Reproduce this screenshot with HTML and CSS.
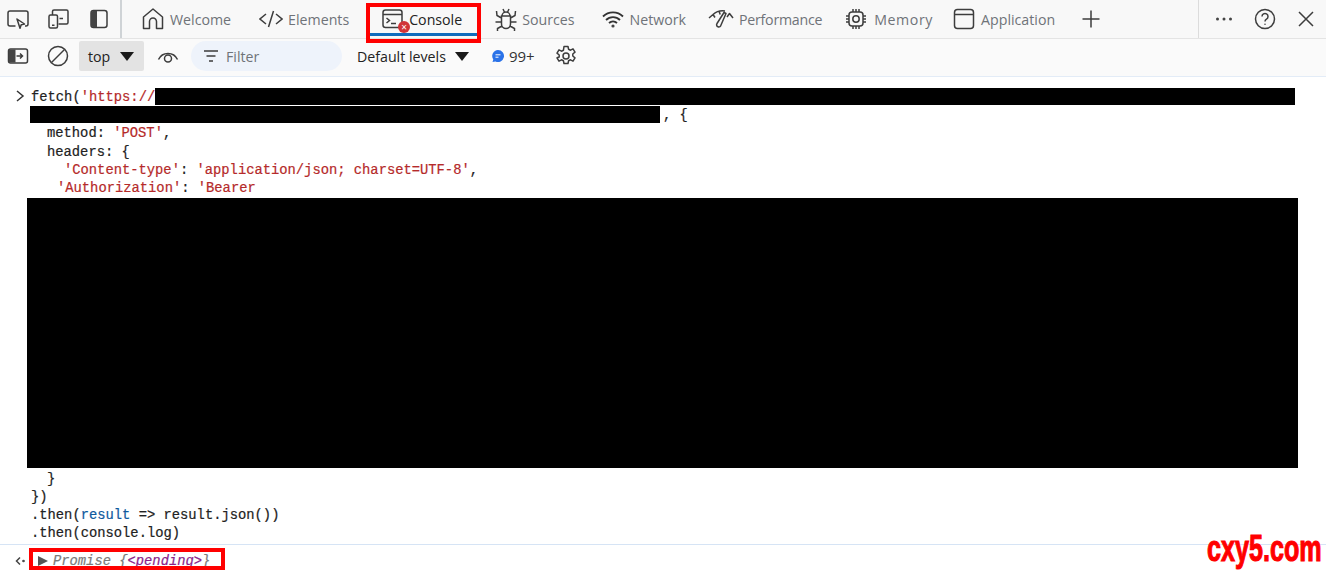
FILE: index.html
```html
<!DOCTYPE html>
<html lang="en">
<head>
<meta charset="utf-8">
<title>DevTools Console</title>
<link rel="stylesheet" href="styles.css">
</head>
<body>
<div class="app">
  <header class="tabbar">
    <div class="tools">
      <button class="ico"><svg width="22" height="22" viewBox="0 0 22 22"><path d="M8.500 18H3a2 2 0 0 1-2-2V5a2 2 0 0 1 2-2h16a2 2 0 0 1 2 2v11a2 2 0 0 1-2 2h-1"/><path d="M10 11l7.500 5-3.300.8-1.200 3.400z" stroke-linejoin="round"/></svg></button>
      <button class="ico"><svg width="22" height="22" viewBox="0 0 22 22"><path d="M4.500 7V3.500A1.500 1.500 0 0 1 6 2h12.500A1.500 1.500 0 0 1 20 3.500v11a1.500 1.500 0 0 1-1.500 1.500h-8"/><rect x="1" y="7" width="8.500" height="13" rx="1.500"/><path d="M11.500 10.500h3.500M4 17.200h2.500"/></svg></button>
      <button class="ico"><svg width="20" height="20" viewBox="0 0 20 20"><rect x="2" y="1.500" width="16" height="17" rx="2.500"/><path class="fill" d="M4 2h4v16H4a2 2 0 0 1-2-2V4a2 2 0 0 1 2-2z"/></svg></button>
    </div>
    <nav class="tabs">
      <a class="tab t-welcome"><svg width="22" height="24" viewBox="0 0 22 24"><path d="M1.500 21.500V10L11 2l9.500 8v11.500h-6v-7a3.500 3.500 0 0 0-7 0v7z" stroke-linejoin="round"/></svg>Welcome</a>
      <a class="tab t-elements"><svg width="24" height="20" viewBox="0 0 24 20"><path d="M7 5l-6 5 6 5M17 5l6 5-6 5M14.500 2L9.500 18"/></svg>Elements</a>
      <a class="tab t-console active"><span class="badged"><svg width="22" height="22" viewBox="0 0 22 22"><rect x="1" y="2" width="19" height="17.500" rx="2.500"/><path d="M1 6.500h19M4.500 10l3 2.500-3 2.500M9 15.500h5"/></svg><i class="err">×</i></span>Console</a>
      <a class="tab t-sources"><svg width="24" height="24" viewBox="0 0 24 24"><path d="M7.500 9h9v8a4.500 4.500 0 0 1-9 0zM8 9a4 4 0 0 1 8 0M9 2l1.500 3.300M15 2l-1.500 3.300M7.500 11L3 8.500 2.500 4M16.500 11L21 8.500 21.500 4M7.500 15H1.500M16.500 15h6M8 19l-4.500 2.500V25M16 19l4.500 2.500V25"/></svg>Sources</a>
      <a class="tab t-network"><svg class="bold" width="22" height="18" viewBox="0 0 22 18"><path d="M1 6.500a14 14 0 0 1 20 0M4 10a10 10 0 0 1 14 0M7 13a6 6 0 0 1 8 0"/><circle class="fill" cx="11" cy="16" r="1.600"/></svg>Network</a>
      <a class="tab t-perf"><svg width="26" height="20" viewBox="0 0 26 20"><path d="M1 9l4-3.500 2 3M5 5.500Q10 1 17 2M25 9l-3.500-4.500-2.500 3.500M11 2l1.200 3.500M9 14.500L16 3.500l2 1-5 11.500a2.200 2.200 0 1 1-4-1.500z" stroke-linejoin="round"/></svg>Performance</a>
      <a class="tab t-memory"><svg width="22" height="24" viewBox="0 0 22 24"><rect x="4" y="5" width="14" height="14" rx="3"/><circle cx="11" cy="12" r="3.200"/><path d="M8 2v3M11 2v3M14 2v3M8 19v3M11 19v3M14 19v3M1 9h3M1 12h3M1 15h3M18 9h3M18 12h3M18 15h3"/></svg>Memory</a>
      <a class="tab t-app"><svg width="22" height="22" viewBox="0 0 22 22"><rect x="1.500" y="1.500" width="19" height="19" rx="3"/><path d="M1.500 6.500h19"/></svg>Application</a>
      <button class="ico plus"><svg width="20" height="20" viewBox="0 0 20 20"><path d="M10 1.500v17M1.500 10h17"/></svg></button>
    </nav>
    <div class="rightbar">
      <button class="ico dots"><svg width="18" height="6" viewBox="0 0 18 6"><circle class="fill" cx="2.500" cy="3" r="1.500"/><circle class="fill" cx="9" cy="3" r="1.500"/><circle class="fill" cx="15.500" cy="3" r="1.500"/></svg></button>
      <button class="ico help"><svg width="22" height="22" viewBox="0 0 22 22"><circle cx="11" cy="11" r="9.500"/><path d="M8 8.500a3 3 0 1 1 4.500 2.600c-1 .6-1.500 1.200-1.500 2.400"/><circle class="fill" cx="11" cy="16.200" r=".8"/></svg></button>
      <button class="ico close"><svg width="18" height="18" viewBox="0 0 18 18"><path d="M2 2l14 14M16 2L2 16"/></svg></button>
    </div>
  </header>

  <div class="filterbar">
    <button class="ico"><svg width="22" height="18" viewBox="0 0 22 18"><rect x="1.500" y="2" width="19" height="14" rx="2"/><path class="fill" d="M3 2.500h5.500v13H3a1 1 0 0 1-1-1v-11a1 1 0 0 1 1-1z"/><path d="M9.500 9h6M13 6.500L15.500 9 13 11.500"/></svg></button>
    <button class="ico block"><svg width="22" height="22" viewBox="0 0 22 22"><circle cx="11" cy="11" r="9.500"/><path d="M4.500 17.500l13-13"/></svg></button>
    <div class="context">top<i class="tri"></i></div>
    <button class="ico eye"><svg width="22" height="14" viewBox="0 0 22 14"><path d="M1.500 10.500a10.500 10.500 0 0 1 19 0"/><circle cx="11" cy="9.500" r="3.500"/></svg></button>
    <div class="filter"><svg width="14" height="12" viewBox="0 0 14 12"><path d="M0 1h14M2.500 6h9M5 11h4"/></svg>Filter</div>
    <div class="levels">Default levels<i class="tri"></i></div>
    <div class="issues"><svg width="14" height="14" viewBox="0 0 14 14"><path class="msg" d="M7 1a6 6 0 1 1-2.600 11.400L1.500 13l.8-2.600A6 6 0 0 1 7 1z"/><path class="msgline" d="M4.500 5.800h5M4.500 8.200h3"/></svg>99+</div>
    <button class="ico gear"><svg width="22" height="22" viewBox="0 0 22 22"><path d="M9 1.500h4l.6 2.800 1.900.9 2.500-1.300 2 3.300-2.200 1.800v2l2.200 1.800-2 3.300-2.500-1.300-1.900.9-.6 2.800H9l-.6-2.800-1.900-.9-2.500 1.300-2-3.300L4.200 12v-2L2 8.200l2-3.300 2.500 1.300 1.900-.9z" stroke-linejoin="round"/><circle cx="11" cy="11" r="3"/></svg></button>
  </div>

  <main class="console">
    <div class="entry">
      <svg class="prompt" width="10" height="12" viewBox="0 0 10 12"><path d="M2 1l6 5-6 5"/></svg>
      <div class="line"><span>fetch(<b class="str">'https://</b></span><span class="redact r1"></span></div>
      <div class="line"><span class="redact r2"></span><span class="after">, {</span></div>
      <div class="line in1">method: <b class="str">'POST'</b>,</div>
      <div class="line in1">headers: {</div>
      <div class="line in3"><b class="str">'Content-type'</b>: <b class="str">'application/json; charset=UTF-8'</b>,</div>
      <div class="line in2"><b class="str">'Authorization'</b>: <b class="str">'Bearer</b></div>
      <div class="redact big"></div>
      <div class="line in1">}</div>
      <div class="line">})</div>
      <div class="line">.then(<b class="var">result</b> =&gt; result.json())</div>
      <div class="line">.then(console.log)</div>
    </div>
    <div class="result">
      <svg class="back" width="10" height="10" viewBox="0 0 10 10"><path d="M5 1.500L1.500 5 5 8.500"/><circle cx="8.500" cy="5" r=".6"/></svg>
      <i class="caret"></i><em class="promise">Promise {<b class="pending">&lt;pending&gt;</b>}</em>
    </div>
  </main>

  <div class="mark mark-tab"></div>
  <div class="mark mark-result"></div>
  <div class="watermark">cxy5.com</div>
</div>
</body>
</html>
```
FILE: styles.css
```css
* { box-sizing: border-box; }
html, body { margin: 0; height: 100%; background: #fff; }
body { overflow: hidden; font-family: "Open Sans", "Noto Sans", sans-serif; }
.app { position: relative; width: 1326px; height: 570px; overflow: hidden; }
svg { display: block; flex: none; fill: none; stroke: #3d3d3d; stroke-width: 1.500; }
svg.bold { stroke-width: 1.800; stroke: #333; }
svg .fill { fill: #444; stroke: none; }
button { border: 0; background: none; padding: 0; display: flex; align-items: center; justify-content: center; }

.tabbar { display: flex; align-items: center; height: 39px; background: #f8f8f8; border-bottom: 1px solid #e4e4e4; }
.tools { display: flex; align-items: center; gap: 19px; width: 122px; height: 38px; padding-left: 7px; border-right: 2px solid #cfd3d6; }
.tabs { display: flex; align-items: center; height: 38px; flex: none; width: 1077px; border-right: 1px solid #dcdcdc; }
.tab { display: flex; align-items: center; gap: 6px; height: 38px; font-size: 14.200px; color: #6f7378; white-space: nowrap; }
.t-welcome { margin-left: 20px; }
.t-elements { margin-left: 28px; gap: 5px; }
.t-console { margin-left: 33px; gap: 5px; color: #222; position: relative; }
.t-sources { margin-left: 32px; gap: 4px; }
.t-network { margin-left: 27px; }
.t-perf { margin-left: 22px; gap: 5px; letter-spacing: -.25px; }
.t-memory { margin-left: 23px; gap: 7px; letter-spacing: .6px; }
.t-app { margin-left: 20px; }
.plus { margin-left: 26px; }
.active::after { content: ""; position: absolute; left: -13px; right: -15px; top: 33px; height: 3px; background: #0f6cbd; }
.badged { position: relative; display: block; }
.err { position: absolute; left: 16px; top: 13px; width: 12px; height: 12px; border-radius: 50%; background: #d13438; color: #fff; font-style: normal; font-size: 10px; line-height: 12px; text-align: center; }
.rightbar { display: flex; align-items: center; padding-left: 16px; }
.help { margin-left: 21px; }
.close { margin-left: 21px; }

.filterbar { display: flex; align-items: center; height: 38px; background: #fafafa; border-bottom: 1px solid #e3ecf7; padding: 0 0 3px 7px; }
.block { margin-left: 18px; }
.context { display: flex; align-items: center; justify-content: space-between; width: 65px; height: 30px; margin-left: 10px; padding: 0 10px 0 9px; background: #e3e3e3; border-radius: 2px; font-size: 14.200px; color: #222; }
.tri { width: 0; height: 0; border-left: 7px solid transparent; border-right: 7px solid transparent; border-top: 9px solid #1a1a1a; }
.eye { margin-left: 13px; }
.filter { display: flex; align-items: center; gap: 8px; width: 151px; height: 30px; margin-left: 12px; padding-left: 13px; border-radius: 15px; background: #eef3fb; font-size: 14.200px; color: #6f7378; }
.levels { display: flex; align-items: center; gap: 9px; margin-left: 15px; font-size: 14.200px; color: #222; }
.issues { display: flex; align-items: center; gap: 4px; margin-left: 22px; font-size: 15px; color: #333; }
.issues svg { stroke: none; }
.issues .msg { fill: #2a72e8; stroke: none; }
.issues .msgline { stroke: #fff; stroke-width: 1; }
.gear { margin-left: 20px; }

.console { font-family: "Liberation Mono", monospace; font-size: 13.800px; color: #222; -webkit-text-stroke: .2px currentColor; }
.entry { position: relative; padding: 12px 0 0 31px; border-bottom: 1px solid #d6e4f5; }
.prompt { position: absolute; left: 15px; top: 13px; stroke: #333; }
.line { display: flex; height: 18.200px; line-height: 18.200px; white-space: pre; }
.line b { font-weight: 400; }
.str { color: #b52a2a; }
.var { color: #0f5a9e; }
.in1 { padding-left: 16px; }
.in2 { padding-left: 26px; }
.in3 { padding-left: 33px; }
.redact { background: #000; display: block; }
.r1 { width: 1140px; height: 17px; margin-top: -1px; }
.r2 { width: 630px; margin-left: -1px; height: 17px; margin-top: -1px; }
.after { padding-left: 3px; }
.big { width: 1271px; height: 270px; margin: 0 0 2.800px -4px; }
.result { display: flex; align-items: center; height: 25px; padding: 8px 0 0 15px; }
.back { stroke: #444; }
.caret { width: 0; height: 0; margin-left: 13px; border-left: 10px solid #555; border-top: 5.500px solid transparent; border-bottom: 5.500px solid transparent; }
.promise { margin-left: 5px; color: #7a7a7a; }
.pending { font-weight: 400; color: #8b1f8b; }

.mark { position: absolute; border: 4px solid #f00; }
.mark-tab { left: 366px; top: 3px; width: 115px; height: 40px; }
.mark-result { left: 29px; top: 548px; width: 196px; height: 22px; }
.watermark { position: absolute; right: 4px; top: 529px; font-family: "Liberation Sans", sans-serif; font-weight: 700; font-size: 37px; line-height: 40px; color: #f00; white-space: nowrap; transform: scaleX(.68); transform-origin: right center; -webkit-text-stroke: 1.100px #f00; }
```
